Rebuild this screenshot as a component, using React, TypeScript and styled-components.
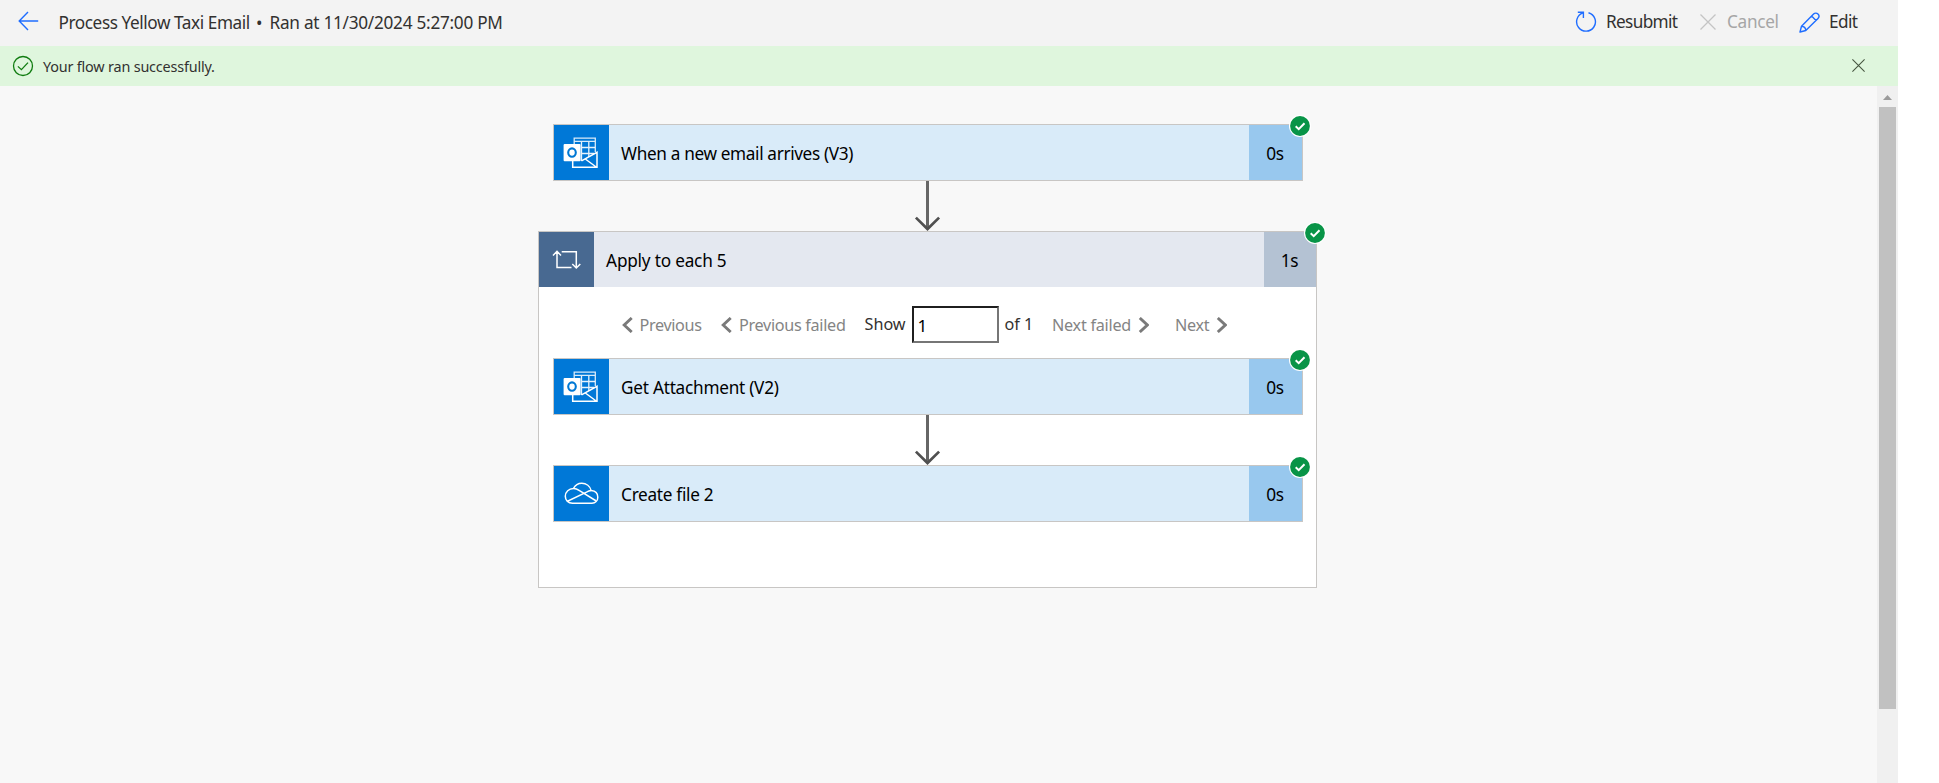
import React from 'react';
import styled, { createGlobalStyle } from 'styled-components';

const GlobalStyle = createGlobalStyle`
  *, *::before, *::after { box-sizing: border-box; }
  html, body { margin: 0; background: #fff; }
  body { font-family: 'Noto Sans', 'Open Sans', sans-serif; color: #323130; overflow: hidden; }
  button { font: inherit; color: inherit; background: none; border: 0; padding: 0; }
  svg { display: block; flex: none; }
`;

const Page = styled.div`
  display: flex;
  flex-direction: column;
  width: 1898px;
  height: 783px;
`;

const Header = styled.header`
  display: flex;
  align-items: center;
  height: 46px;
  flex: none;
  padding: 0 40px 0 18px;
  background: #f3f3f3;
  font-size: 17.2px;
  line-height: 24px;
`;

const BackButton = styled.button`
  width: 40.5px;
  height: 24px;
  padding-top: 1px;
  margin-top: -5px;
`;

const Title = styled.h1`
  display: flex;
  margin: 0;
  flex: 1;
  font-size: inherit;
  font-weight: 400;
  white-space: nowrap;
`;

const FlowName = styled.span`
  width: 197.5px;
  letter-spacing: -0.42px;
`;

const Separator = styled.span`
  width: 13.5px;
`;

const RunTime = styled.span`
  letter-spacing: -0.26px;
`;

const Commands = styled.div`
  display: flex;
  align-items: center;
  margin-top: -2px;
`;

const Command = styled.button<{ $width: number; $gap: number; $track: number }>`
  display: flex;
  align-items: center;
  gap: ${(p) => p.$gap}px;
  width: ${(p) => p.$width}px;
  letter-spacing: ${(p) => p.$track}px;
  white-space: nowrap;
  &:disabled { color: #a6a6a6; }
`;

const Banner = styled.div`
  display: flex;
  align-items: center;
  height: 40px;
  flex: none;
  padding: 0 33px 0 12px;
  background: #dff6dd;
  font-size: 14.4px;
  line-height: 20px;
  letter-spacing: -0.18px;
`;

const BannerText = styled.span`
  flex: 1;
  padding: 1px 0 0 9px;
`;

const DismissButton = styled.button`
  padding-bottom: 1px;
`;

const Body = styled.div`
  display: flex;
  flex: 1;
  min-height: 0;
`;

const Canvas = styled.main`
  display: flex;
  flex-direction: column;
  align-items: center;
  flex: 1;
  padding: 38px 22px 0 0;
  background: #f8f8f8;
`;

const ScrollTrack = styled.div`
  display: flex;
  flex-direction: column;
  align-items: center;
  width: 21px;
  padding-top: 9px;
  background: #f0f0f0;
`;

const ScrollThumb = styled.div`
  width: 17px;
  height: 602px;
  margin-top: 7px;
  background: #c1c1c1;
`;

const Card = styled.section`
  position: relative;
  display: flex;
  width: 750px;
  height: 57px;
  border: 1px solid #c8c6c4;
  background: #d9ebf9;
`;

const IconTile = styled.div<{ $color: string }>`
  width: 55px;
  height: 55px;
  flex: none;
  background: ${(p) => p.$color};
`;

const CardTitle = styled.div<{ $track: number }>`
  flex: 1;
  padding: 1px 0 0 12.6px;
  font-size: 17.2px;
  line-height: 56px;
  color: #000;
  white-space: nowrap;
  letter-spacing: ${(p) => p.$track}px;
`;

const Duration = styled.div<{ $scope?: boolean }>`
  width: ${(p) => (p.$scope ? 52 : 53)}px;
  padding-top: 1px;
  background: ${(p) => (p.$scope ? '#b4c2d3' : '#98c8ee')};
  color: #000;
  font-size: 17.3px;
  line-height: 56px;
  height: 55px;
  letter-spacing: -0.4px;
  text-align: center;
`;

const Badge = styled.span<{ $right: number }>`
  position: absolute;
  top: -10px;
  right: ${(p) => p.$right}px;
  width: 22px;
  height: 22px;
`;

const Scope = styled.section`
  position: relative;
  display: flex;
  flex-direction: column;
  width: 779px;
  height: 357px;
  margin-right: 1px;
  border: 1px solid #c8c6c4;
  background: #fff;
`;

const ScopeHeader = styled.div`
  display: flex;
  height: 55px;
  flex: none;
  background: #e4e8f0;
`;

const ScopeBody = styled.div`
  display: flex;
  flex-direction: column;
  padding-left: 14px;
`;

const Pager = styled.nav`
  display: flex;
  align-items: center;
  height: 71px;
  padding: 3px 0 0 69px;
  font-size: 16.2px;
  line-height: 24px;
  color: #323130;
`;

const PagerButton = styled.button<{ $width: number; $track: number }>`
  display: flex;
  align-items: center;
  gap: 7px;
  width: ${(p) => p.$width}px;
  flex: none;
  padding-top: 2px;
  letter-spacing: ${(p) => p.$track}px;
  white-space: nowrap;
  &:disabled { color: #848484; }
`;

const PagerLabel = styled.span<{ $width: number }>`
  width: ${(p) => p.$width}px;
  flex: none;
  white-space: nowrap;
`;

const PageInput = styled.input`
  width: 87px;
  height: 37px;
  flex: none;
  margin: 0 6px 0 0;
  padding: 2px 0 0 4px;
  border: 2px solid;
  border-color: #1f1f1f #767676 #767676 #1f1f1f;
  border-radius: 0;
  background: #fff;
  color: #000;
  font: 17px 'Noto Sans', sans-serif;
  outline: 0;
`;

const Connector = styled.svg`
  align-self: center;
  margin-right: 1px;
`;

const ScopeConnector = styled(Connector)`
  margin-right: 14px;
`;

const BLUE = '#1f6dff';

function BackIcon() {
  return (
    <svg width="21" height="20" viewBox="0 0 21 20" fill="none" stroke={BLUE} strokeWidth="1.4">
      <path d="M20.2 10H1.2M10 1 1.2 10 10 19" />
    </svg>
  );
}

function ResubmitIcon() {
  return (
    <svg width="22" height="22" viewBox="0 0 22 22" fill="none" stroke={BLUE} strokeWidth="1.4">
      <path d="M13.5 1.7A9.4 9.4 0 1 1 7.9 1.9M2.8 1.2H8.4V6.9" />
    </svg>
  );
}

function CrossIcon({ size, color }: { size: number; color: string }) {
  return (
    <svg width={size} height={size} viewBox="0 0 16 16" fill="none" stroke={color} strokeWidth="1.3">
      <path d="M.5.5 15.5 15.5M15.5.5.5 15.5" />
    </svg>
  );
}

function PencilIcon() {
  return (
    <svg width="21" height="21" viewBox="0 0 21 21" fill="none" stroke={BLUE} strokeWidth="1.4" strokeLinejoin="round">
      <path d="M1 20 2.5 14.2 14.6 2.1A3 3 0 0 1 19 6.4L6.8 18.5ZM12.6 4.1 17 8.4M2.5 14.2C4.8 14.3 6.6 16 6.8 18.5" />
    </svg>
  );
}

function SuccessIcon() {
  return (
    <svg width="22" height="22" viewBox="0 0 22 22" fill="none" stroke="#107c10" strokeWidth="1.3">
      <circle cx="11" cy="11" r="9.5" />
      <path d="M5.9 11.4 9.4 14.7 16 7.6" />
    </svg>
  );
}

function BadgeIcon() {
  return (
    <svg width="22" height="22" viewBox="0 0 22 22" fill="none">
      <circle cx="11" cy="11" r="11" fill="#fff" />
      <circle cx="11" cy="11" r="9.9" fill="#089447" />
      <path d="M6.7 11.3 9.7 14.2 15.5 8.2" stroke="#fff" strokeWidth="2" />
    </svg>
  );
}

function OutlookIcon() {
  return (
    <svg width="55" height="55" viewBox="0 0 55 55" fill="none" stroke="#fff">
      <path d="M20.2 19V13.2H41.3V27M20 16.3H41.3" strokeWidth="1.3" opacity=".85" />
      <path d="M27.5 17V36M34.8 17V32M27 22.5H41M27 28.5H40" strokeWidth="1.3" opacity=".9" />
      <path d="M18.7 36V42.3H43V27.3L27.5 35.8M31.3 34 42.2 42" strokeWidth="1.5" />
      <rect x="9.6" y="19" width="17" height="17.2" rx="1" fill="#fff" stroke="none" />
      <ellipse cx="18" cy="27.6" rx="3.8" ry="4.2" stroke="#0078d4" strokeWidth="2.1" />
    </svg>
  );
}

function OneDriveIcon() {
  return (
    <svg width="55" height="55" viewBox="0 0 55 55" fill="none" stroke="#fff" strokeWidth="1.5" strokeLinejoin="round">
      <path d="M18.5 37.2C14 37.2 11.3 34 11.3 30.3C11.3 25.7 15 22.6 19.4 22.5C21.2 19.1 24.3 17.3 27.8 17.3C32.2 17.3 36.1 20.2 37.2 24.6C41.3 25 43.8 27.8 43.8 31.3C43.8 34.7 41.3 37.2 38 37.2Z" />
      <path d="M19.4 22.5C22 22.4 23.6 23.4 25.5 24.7L42.3 35M13.5 35.2 32.5 26.1C34 25.3 35.5 24.8 37.2 24.6" />
    </svg>
  );
}

function LoopIcon() {
  return (
    <svg width="55" height="55" viewBox="0 0 55 55" fill="none" stroke="#fff" strokeWidth="1.5">
      <path d="M32.5 35.4H18V20M14 23.4 18 19.3 22 23.4M22.7 19.7H37.3V35.4M33.3 31.9 37.3 36 41.3 31.9" />
    </svg>
  );
}

function Chevron({ right }: { right?: boolean }) {
  return (
    <svg width="11" height="16" viewBox="0 0 11 16" fill="none" stroke="#7a7a7a" strokeWidth="2.9">
      <path d={right ? 'M1.8 1 9.3 8 1.8 15' : 'M9.7 1 2.2 8 9.7 15'} />
    </svg>
  );
}

function ArrowShape() {
  return (
    <>
      <path d="M13.5 0V48" strokeWidth="3" stroke="#666" />
      <path d="M1.9 36.6 13.5 48 25.1 36.6" strokeWidth="2.7" />
    </>
  );
}

const arrowProps = { width: 27, height: 50, viewBox: '0 0 27 50', fill: 'none', stroke: '#505050' };

interface ActionProps {
  title: string;
  track: number;
  icon: React.ReactNode;
}

function Action({ title, track, icon }: ActionProps) {
  return (
    <Card>
      <IconTile $color="#0078d7">{icon}</IconTile>
      <CardTitle $track={track}>{title}</CardTitle>
      <Duration>0s</Duration>
      <Badge $right={-9}><BadgeIcon /></Badge>
    </Card>
  );
}

export default function App() {
  return (
    <Page>
      <GlobalStyle />
      <Header>
        <BackButton aria-label="Back"><BackIcon /></BackButton>
        <Title>
          <FlowName>Process Yellow Taxi Email</FlowName>
          <Separator>•</Separator>
          <RunTime>Ran at 11/30/2024 5:27:00 PM</RunTime>
        </Title>
        <Commands>
          <Command $width={124.5} $gap={9} $track={-0.65}><ResubmitIcon />Resubmit</Command>
          <Command $width={99.5} $gap={11.5} $track={-0.3} disabled><CrossIcon size={16} color="#c4c4c4" />Cancel</Command>
          <Command $width={59} $gap={9} $track={-0.6}><PencilIcon />Edit</Command>
        </Commands>
      </Header>
      <Banner>
        <SuccessIcon />
        <BannerText>Your flow ran successfully.</BannerText>
        <DismissButton aria-label="Dismiss"><CrossIcon size={13} color="#44543f" /></DismissButton>
      </Banner>
      <Body>
        <Canvas>
          <Action title="When a new email arrives (V3)" track={-0.35} icon={<OutlookIcon />} />
          <Connector {...arrowProps}><ArrowShape /></Connector>
          <Scope>
            <ScopeHeader>
              <IconTile $color="#486991"><LoopIcon /></IconTile>
              <CardTitle $track={-0.2}>Apply to each 5</CardTitle>
              <Duration $scope>1s</Duration>
            </ScopeHeader>
            <Badge $right={-10}><BadgeIcon /></Badge>
            <ScopeBody>
              <Pager>
                <PagerButton $width={99.5} $track={-0.35} disabled><Chevron />Previous</PagerButton>
                <PagerButton $width={143.5} $track={-0.31} disabled><Chevron />Previous failed</PagerButton>
                <PagerLabel $width={47}>Show</PagerLabel>
                <PageInput defaultValue="1" />
                <PagerLabel $width={47.5}>of 1</PagerLabel>
                <PagerButton $width={123} $track={-0.25} disabled>Next failed<Chevron right /></PagerButton>
                <PagerButton $width={53} $track={-0.33} disabled>Next<Chevron right /></PagerButton>
              </Pager>
              <Action title="Get Attachment (V2)" track={-0.25} icon={<OutlookIcon />} />
              <ScopeConnector {...arrowProps}><ArrowShape /></ScopeConnector>
              <Action title="Create file 2" track={-0.3} icon={<OneDriveIcon />} />
            </ScopeBody>
          </Scope>
        </Canvas>
        <ScrollTrack>
          <svg width="9" height="5" viewBox="0 0 9 5"><path d="M4.5 0 9 5H0Z" fill="#9b9b9b" /></svg>
          <ScrollThumb />
        </ScrollTrack>
      </Body>
    </Page>
  );
}
